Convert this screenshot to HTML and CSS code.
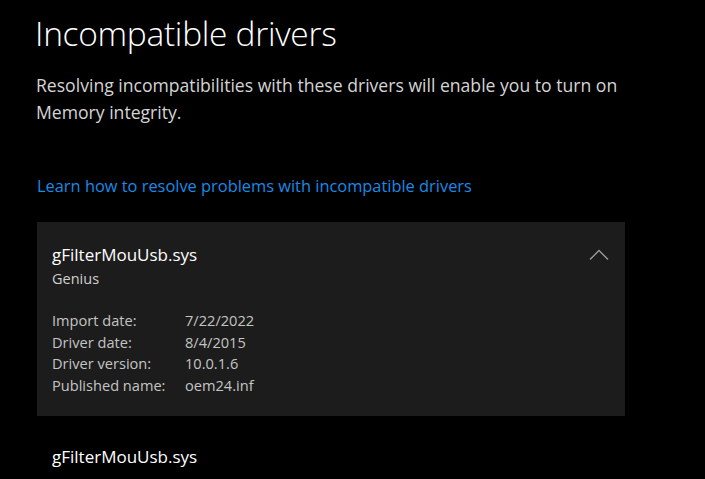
FILE: index.html
```html
<!DOCTYPE html>
<html lang="en">
<head>
    <meta charset="UTF-8">
    <title>Incompatible drivers</title>
    <link rel="stylesheet" href="styles.css">
</head>
<body>
    <h1 class="title">Incompatible drivers</h1>
    <p class="desc">Resolving incompatibilities with these drivers will enable you to turn on Memory integrity.</p>

    <a class="link" href="#">Learn how to resolve problems with incompatible drivers</a>

    <div class="card open">
        <div class="card-head">
            <div>
                <div class="drv-name">gFilterMouUsb.sys</div>
                <div class="drv-vendor">Genius</div>
            </div>
            <svg class="chevron" width="20" height="12" viewBox="0 0 20 12">
                <path d="M1 10.5 L10 1.5 L19 10.5" fill="none" stroke="#9a9a9a" stroke-width="1.4"/>
            </svg>
        </div>
        <div class="details">
            <span>Import date:</span><span>7/22/2022</span>
            <span>Driver date:</span><span>8/4/2015</span>
            <span>Driver version:</span><span>10.0.1.6</span>
            <span>Published name:</span><span>oem24.inf</span>
        </div>
    </div>

    <div class="card">
        <div class="drv-name">gFilterMouUsb.sys</div>
    </div>
</body>
</html>
```

FILE: styles.css
```css
body {
    margin: 0;
    padding: 0 35px;
    background: #000;
    color: #fff;
    font-family: "Open Sans", "Noto Sans", sans-serif;
    overflow: hidden;
}
.title {
    margin: 0;
    padding-top: 10px;
    font-size: 33.5px;
    font-weight: 300;
    line-height: 46px;
    letter-spacing: -0.3px;
}
.desc {
    margin: 16px 0 0 1px;
    width: 620px;
    font-size: 17.6px;
    line-height: 27px;
    color: #d4d4d4;
}
.link {
    display: block;
    margin: 48px 0 0 2px;
    font-size: 16.4px;
    color: #1a8ae5;
    text-decoration: none;
}
.card {
    margin: 8px 0 0 2px;
    width: 588px;
    padding: 20px 15px 0;
    box-sizing: border-box;
}
.card.open {
    background: #1c1c1c;
    height: 194px;
    margin-top: 25px;
}
.card-head {
    display: flex;
    justify-content: space-between;
}
.chevron {
    margin: 7px 1px 0 0;
}
.drv-name {
    font-size: 17px;
    line-height: 26px;
}
.drv-vendor {
    font-size: 14.5px;
    line-height: 22px;
    color: #cfcfcf;
}
.details {
    margin-top: 20px;
    display: grid;
    grid-template-columns: 133px auto;
    font-size: 14.6px;
    line-height: 21.7px;
    color: #c4c4c4;
}
```
